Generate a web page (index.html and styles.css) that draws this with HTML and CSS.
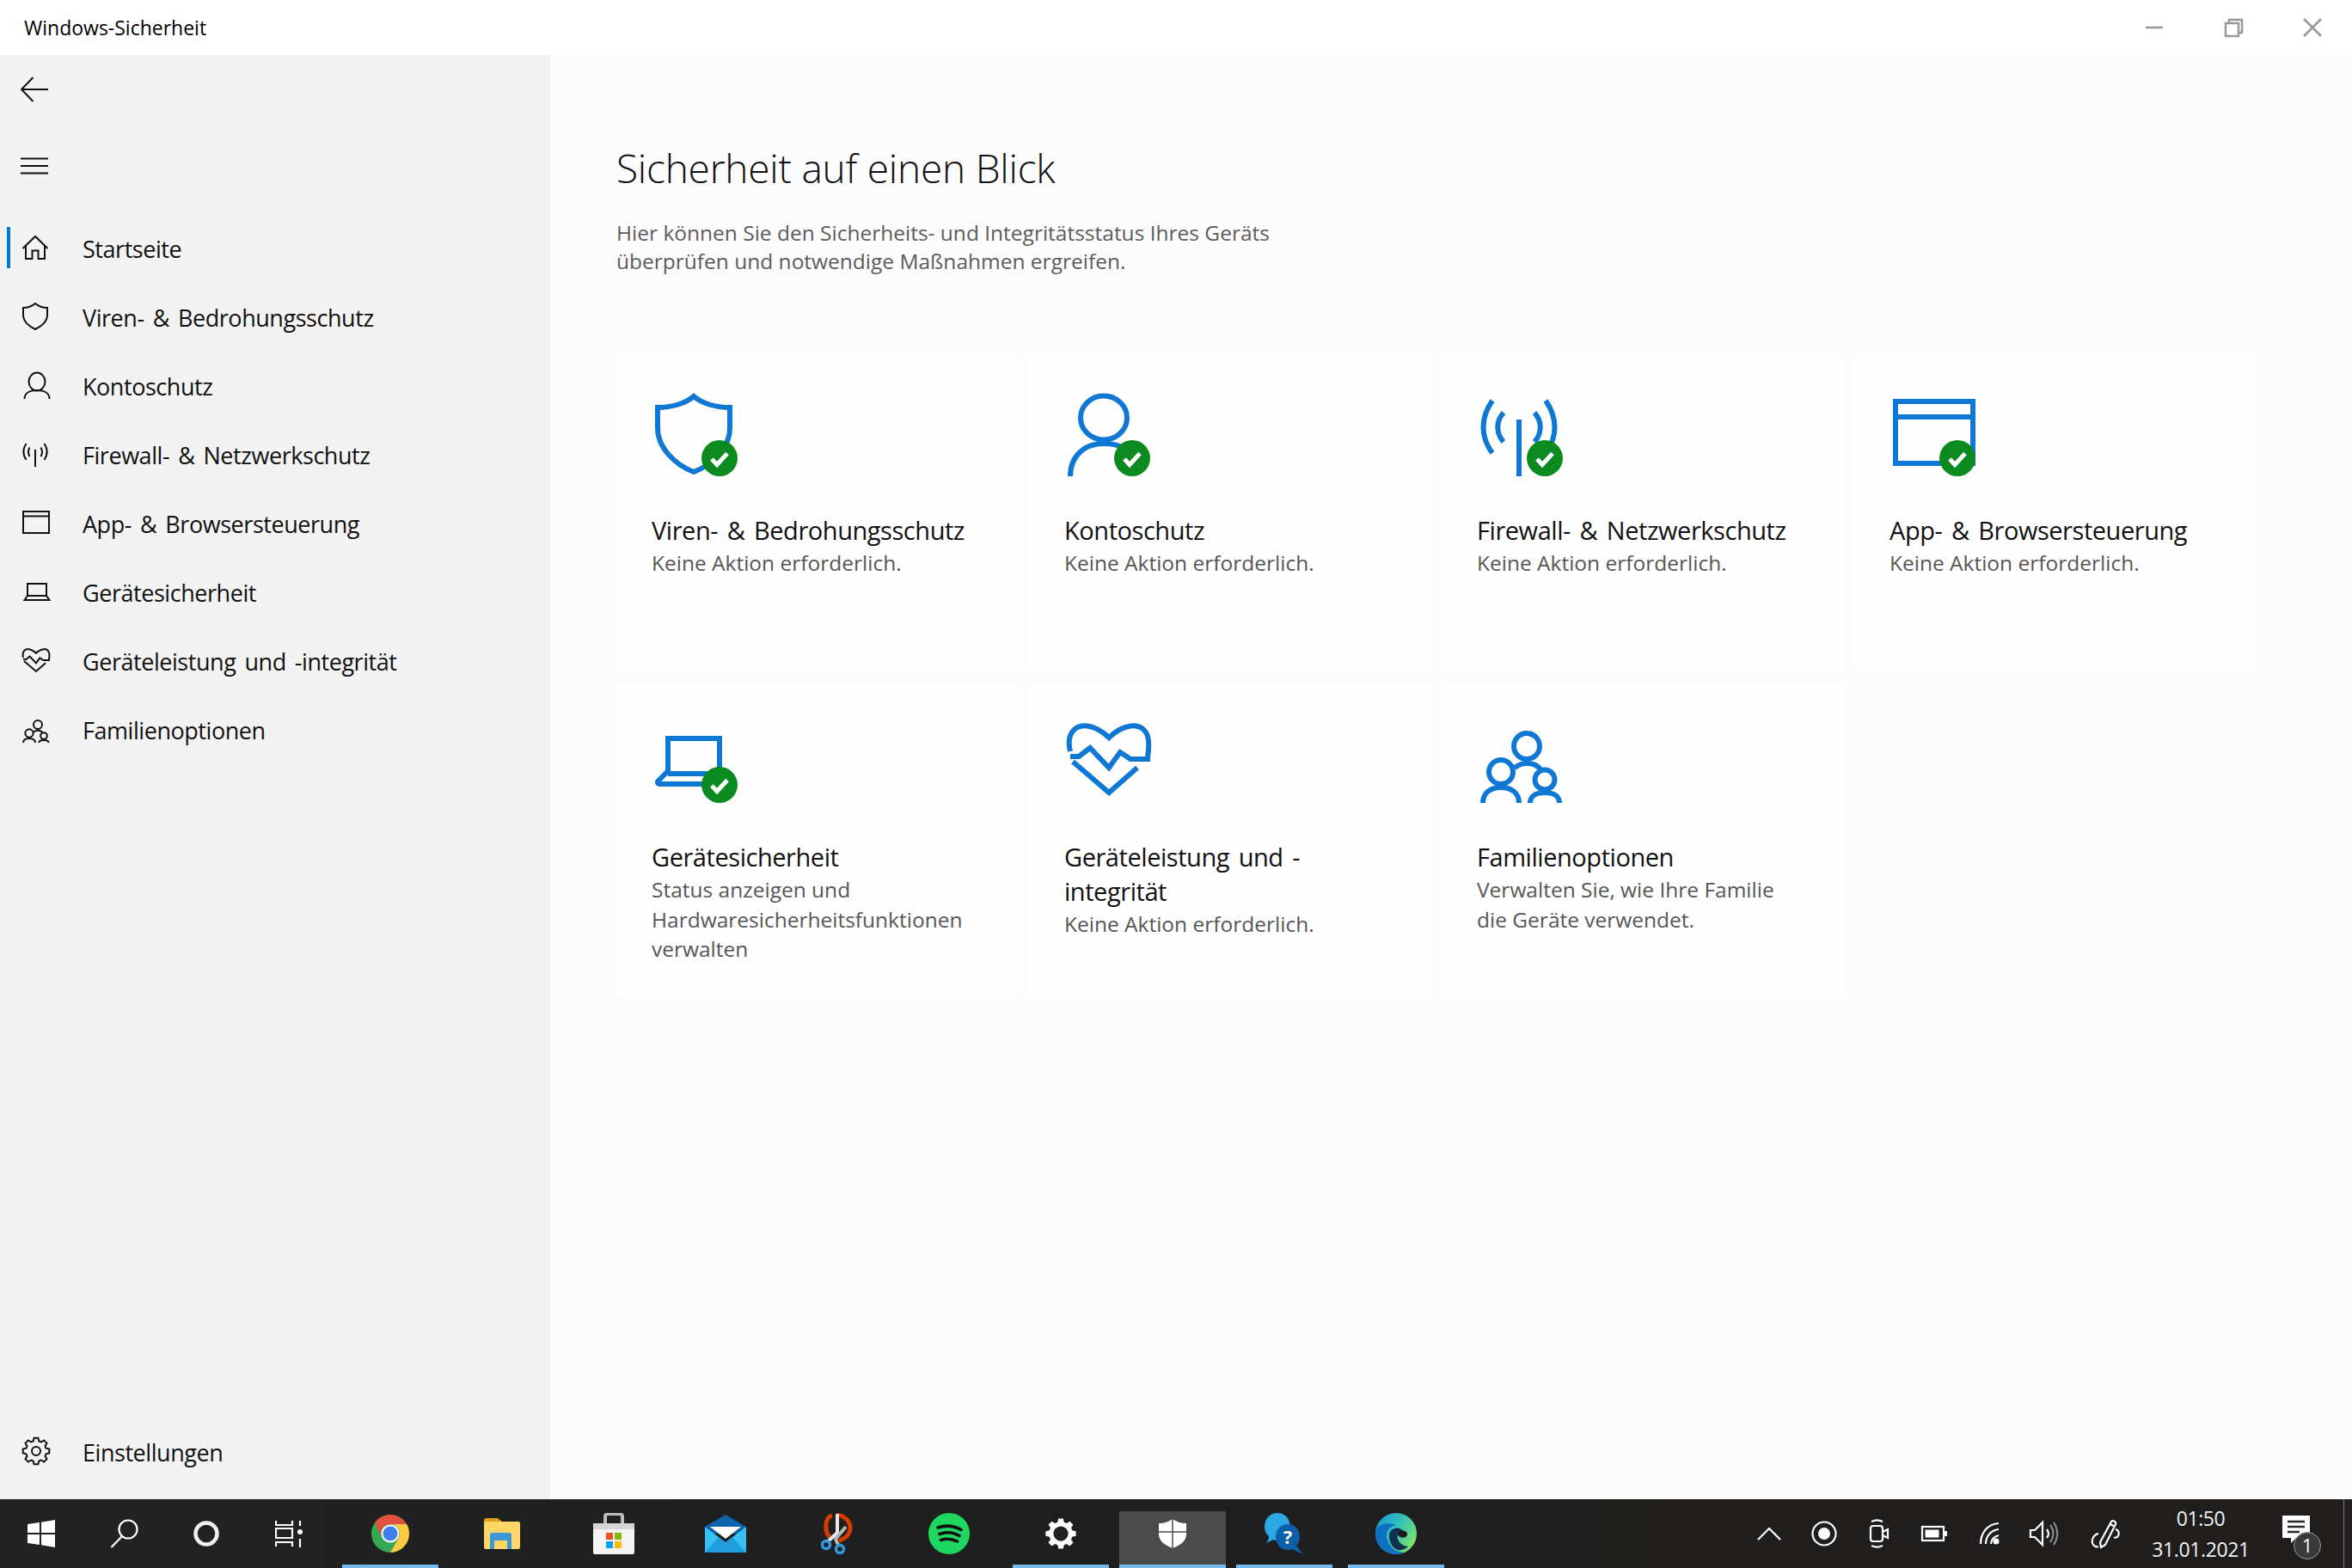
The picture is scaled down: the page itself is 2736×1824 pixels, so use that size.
FILE: index.html
```html
<!DOCTYPE html>
<html lang="de">
<head>
<meta charset="utf-8">
<title>Windows-Sicherheit</title>
<link rel="stylesheet" href="styles.css">
</head>
<body>
<div class="app">
  <header class="titlebar">
    <span class="apptitle">Windows-Sicherheit</span>
    <div class="winctrls">
      <svg class="winbtn" viewBox="0 0 92 64"><path d="M36 32h20"/></svg>
      <svg class="winbtn" viewBox="0 0 92 64"><path d="M37 27h15v15H37zM41 27v-4h15v15h-4"/></svg>
      <svg class="winbtn" viewBox="0 0 92 64"><path d="M36 22l20 20M56 22L36 42"/></svg>
    </div>
  </header>
  <div class="window">
    <aside class="sidebar">
      <div class="toolrow back">
        <svg class="nicon" viewBox="0 0 40 40"><path d="M3 20h31M16.500 6 3 20l13.500 14"/></svg>
      </div>
      <div class="toolrow menu">
        <svg class="nicon" viewBox="0 0 40 40"><path d="M2 11.500h32M2 20h32M2 28.500h32"/></svg>
      </div>
      <nav class="navlist">
        <div class="navitem active">
          <svg class="nicon" viewBox="0 0 40 40"><path d="M4.500 21 19 7l14.500 14M8 17.500V33h7.500V23.500h7V33H30V17.500"/></svg>
          <span>Startseite</span>
        </div>
        <div class="navitem">
          <svg class="nicon" viewBox="0 0 40 40"><path d="M19 5C15 8.500 10 10 5 10v8.500C5 26 12 32 19 35c7-3 14-9 14-16.500V10C28 10 23 8.500 19 5z"/></svg>
          <span>Viren- &amp; Bedrohungsschutz</span>
        </div>
        <div class="navitem">
          <svg class="nicon" viewBox="0 0 40 40"><ellipse cx="21" cy="16" rx="9.500" ry="10.500"/><path d="M6.500 36c0-6 5-10 14.500-10s14.500 4 14.500 10"/></svg>
          <span>Kontoschutz</span>
        </div>
        <div class="navitem">
          <svg class="nicon" viewBox="0 0 40 40"><path d="M19 15v20M8.500 8C4.500 14 4.500 21 8.500 27M12.500 12.500C10.500 16 10.500 19.500 12.500 23M29.500 8C33.500 14 33.500 21 29.500 27M25.500 12.500C27.500 16 27.500 19.500 25.500 23"/></svg>
          <span>Firewall- &amp; Netzwerkschutz</span>
        </div>
        <div class="navitem">
          <svg class="nicon" viewBox="0 0 40 40"><path d="M5 7h30v25H5zM5 12.500h30"/></svg>
          <span>App- &amp; Browsersteuerung</span>
        </div>
        <div class="navitem">
          <svg class="nicon" viewBox="0 0 40 40"><path d="M10 25V11h22v14M6.500 30 10 25h22l3.500 5z"/></svg>
          <span>Gerätesicherheit</span>
        </div>
        <div class="navitem">
          <svg class="nicon" viewBox="0 0 40 40"><g transform="translate(4 5) scale(.3333)" class="thin"><path d="M3 36C1 28 1 20 5 14 12 3 30 3 48 20 66 3 84 3 91 14c4 6 4 16 2 29"/><path d="M3 42h10l13-10 22 23 13-18 12 8h23"/><path d="M6 48l42 36 33-29"/></g></svg>
          <span>Geräteleistung und -integrität</span>
        </div>
        <div class="navitem">
          <svg class="nicon" viewBox="0 0 40 40"><g transform="translate(4 9) scale(.3333)" class="thin"><circle cx="54" cy="18" r="15"/><circle cx="24" cy="48" r="14"/><circle cx="75" cy="57" r="11.500"/><path d="M3 81c0-10 9-15 21-15s21 5 21 15M58 81c0-6 7-9 17-9s17 3 17 9M40 43c4-3 8-5 14-5 8 0 13 3 16 7"/></g></svg>
          <span>Familienoptionen</span>
        </div>
      </nav>
      <div class="navitem settings">
        <svg class="nicon" viewBox="0 0 40 40"><g transform="translate(20 20)"><path d="M-2.400-15.300 2.400-15.300 3.300-11.500 5.800-10.500 9.100-12.500 12.500-9.100 10.500-5.800 11.500-3.300 15.300-2.400 15.300 2.400 11.500 3.300 10.500 5.800 12.500 9.100 9.100 12.500 5.800 10.500 3.300 11.500 2.400 15.300-2.400 15.300-3.300 11.500-5.800 10.500-9.100 12.500-12.500 9.100-10.500 5.800-11.500 3.300-15.300 2.400-15.300-2.400-11.500-3.300-10.500-5.800-12.500-9.100-9.100-12.500-5.800-10.500-3.300-11.500z"/><circle r="5"/></g></svg>
        <span>Einstellungen</span>
      </div>
    </aside>
    <main class="content">
      <h1 class="pagetitle">Sicherheit auf einen Blick</h1>
      <p class="pagedesc">Hier können Sie den Sicherheits- und Integritätsstatus Ihres Geräts<br>überprüfen und notwendige Maßnahmen ergreifen.</p>
      <section class="cards">
        <article class="card">
          <svg class="cicon" viewBox="0 0 96 96">
            <path d="M45 3C36 11 20 16 3 16v24c0 22 19 42 42 51 23-9 42-29 42-51V16C70 16 54 11 45 3z"/>
            <g class="badge"><circle cx="75" cy="75" r="21"/><path d="M66 76l6 6.500 12-13"/></g>
          </svg>
          <h2>Viren- &amp; Bedrohungsschutz</h2>
          <p>Keine Aktion erforderlich.</p>
        </article>
        <article class="card">
          <svg class="cicon" viewBox="0 0 96 96">
            <ellipse cx="42" cy="28" rx="27" ry="25.500"/>
            <path d="M3 96C3 72 20 58 42 58c18 0 28 6 36 17"/>
            <g class="badge"><circle cx="75" cy="75" r="21"/><path d="M66 76l6 6.500 12-13"/></g>
          </svg>
          <h2>Kontoschutz</h2>
          <p>Keine Aktion erforderlich.</p>
        </article>
        <article class="card">
          <svg class="cicon" viewBox="0 0 96 96">
            <path d="M45 30v66M14 8C0 28 0 50 14 69M27 22c-9 10-9 24 0 34M76 8c14 20 14 42 0 61M63 22c9 10 9 24 0 34"/>
            <g class="badge"><circle cx="75" cy="75" r="21"/><path d="M66 76l6 6.500 12-13"/></g>
          </svg>
          <h2>Firewall- &amp; Netzwerkschutz</h2>
          <p>Keine Aktion erforderlich.</p>
        </article>
        <article class="card">
          <svg class="cicon" viewBox="0 0 96 96">
            <path d="M3 9h90v72H3zM3 27h90"/>
            <g class="badge"><circle cx="75" cy="75" r="21"/><path d="M66 76l6 6.500 12-13"/></g>
          </svg>
          <h2>App- &amp; Browsersteuerung</h2>
          <p>Keine Aktion erforderlich.</p>
        </article>
        <article class="card">
          <svg class="cicon" viewBox="0 0 96 96">
            <path d="M15 60V21h60v39M15 59 4 70c-2 2-1 4 3 4h60M15 62h50"/>
            <g class="badge"><circle cx="75" cy="75" r="21"/><path d="M66 76l6 6.500 12-13"/></g>
          </svg>
          <h2>Gerätesicherheit</h2>
          <p>Status anzeigen und<br>Hardwaresicherheitsfunktionen<br>verwalten</p>
        </article>
        <article class="card">
          <svg class="cicon" viewBox="0 0 96 96">
            <path d="M3 36C1 28 1 20 5 14 12 3 30 3 48 20 66 3 84 3 91 14c4 6 4 16 2 29"/>
            <path d="M3 42h10l13-10 22 23 13-18 12 8h23"/>
            <path d="M6 48l42 36 33-29"/>
          </svg>
          <h2>Geräteleistung und -<br>integrität</h2>
          <p>Keine Aktion erforderlich.</p>
        </article>
        <article class="card">
          <svg class="cicon" viewBox="0 0 96 96">
            <g transform="translate(0 12)"><circle cx="54" cy="18" r="15"/><circle cx="24" cy="48" r="14"/><circle cx="75" cy="57" r="11.500"/><path d="M3 84c0-12 9-18 21-18s21 6 21 18M58 84c0-8 7-12 17-12s17 4 17 12M40 43c4-3 8-5 14-5 8 0 13 3 16 7"/></g>
          </svg>
          <h2>Familienoptionen</h2>
          <p>Verwalten Sie, wie Ihre Familie<br>die Geräte verwendet.</p>
        </article>
      </section>
    </main>
  </div>
  <footer class="taskbar">
    <div class="sysbtn">
      <svg class="tb32" viewBox="0 0 32 32"><path class="wfill" d="M0 5l14-2v12H0zM16 2.700 32 0v15H16zM0 17h14v12L0 27zM16 17h16v15l-16-2.700z"/></svg>
    </div>
    <div class="sysbtn">
      <svg class="tb40" viewBox="0 0 40 40"><circle class="wline" cx="25" cy="15" r="10.500"/><path class="wline" d="M18 23 5.500 36"/></svg>
    </div>
    <div class="sysbtn">
      <svg class="tb40" viewBox="0 0 40 40"><circle class="wthick" cx="20" cy="20" r="12.500"/></svg>
    </div>
    <div class="sysbtn">
      <svg class="tb32" viewBox="0 0 32 32"><path class="wline" d="M1 1v5h19V1M1 10h19v11H1zM1 31v-5h19v5M29 1v6M29 22v10"/><circle class="wfill" cx="29" cy="14" r="3"/></svg>
    </div>
    <div class="apps">
      <div class="appslot open">
        <svg class="tb44" viewBox="0 0 44 44">
          <circle cx="22" cy="22" r="22" fill="#34a853"/>
          <path fill="#fbc942" d="M22 11h19a22 22 0 0 1-19 33l9.500-16.500A11 11 0 0 0 22 11z"/>
          <path fill="#e0523f" d="M22 11h19A22 22 0 0 0 4 9.300l8.500 18.200A11 11 0 0 1 22 11z"/>
          <circle cx="22" cy="22" r="10.500" fill="#fff"/><circle cx="22" cy="22" r="8.500" fill="#3f80ea"/>
        </svg>
      </div>
      <div class="appslot">
        <svg class="tbfolder" viewBox="0 0 42 36">
          <path fill="#d9a11d" d="M0 3a3 3 0 0 1 3-3h13l5 4h10v6H0z"/>
          <rect y="4" width="42" height="32" rx="2" fill="#fdd666"/>
          <path fill="#3d97d6" d="M7 36V20a3 3 0 0 1 3-3h19a3 3 0 0 1 3 3v16h-5v-9a1 1 0 0 0-1-1H13a1 1 0 0 0-1 1v9z" />
        </svg>
      </div>
      <div class="appslot">
        <svg class="tb48" viewBox="0 0 48 48">
          <path d="M14 14V4a3 3 0 0 1 3-3h14a3 3 0 0 1 3 3v10" fill="none" stroke="#bdbdbd" stroke-width="4"/>
          <path fill="#f4f4f4" d="M0 12h48v34a2 2 0 0 1-2 2H2a2 2 0 0 1-2-2z"/>
          <path fill="#d6d6d6" d="M0 12h48v7H0z"/>
          <rect x="15" y="23" width="8" height="8" fill="#f25022"/><rect x="25" y="23" width="8" height="8" fill="#7fba00"/><rect x="15" y="33" width="8" height="8" fill="#00a4ef"/><rect x="25" y="33" width="8" height="8" fill="#ffb900"/>
        </svg>
      </div>
      <div class="appslot">
        <svg class="tb48" viewBox="0 0 48 44">
          <path fill="#0f63ad" d="M0 14 24 0l24 14v8H0z"/>
          <path fill="#fff" d="M6 14h36L24 28z"/>
          <path fill="#38c0f3" d="M0 14l24 18 24-18v30H0z"/>
          <path fill="#0e7ecb" d="M48 44H0l16-18 8 6 8-6z" opacity=".55"/>
        </svg>
      </div>
      <div class="appslot">
        <svg class="tbsnip" viewBox="0 0 40 48">
          <path d="M14 3C5 5 5 22 11 28M20 2c8 1 16 8 15 17-1 7-6 11-13 13" fill="none" stroke="#d83b01" stroke-width="5"/>
          <path d="M20 1v22L8 34" fill="none" stroke="#e8e8e8" stroke-width="4"/>
          <path d="M30 16 18 30l3 7" fill="none" stroke="#b5b5b5" stroke-width="4"/>
          <circle cx="7" cy="37" r="4.500" fill="none" stroke="#2f9ae0" stroke-width="3.500"/><circle cx="23" cy="42" r="4.500" fill="none" stroke="#2f9ae0" stroke-width="3.500"/>
        </svg>
      </div>
      <div class="appslot">
        <svg class="tb48" viewBox="0 0 48 48">
          <circle cx="24" cy="24" r="24" fill="#1ed760"/>
          <path d="M11 17c9-3 19-2 27 2.500M13 24.500c7-2.500 16-2 23 2M14.500 31.500c6-2 13-1.500 19 1.500" fill="none" stroke="#111" stroke-width="3.600" stroke-linecap="round"/>
        </svg>
      </div>
      <div class="appslot open">
        <svg class="tb40" viewBox="0 0 40 40"><g transform="translate(20 20) scale(1.150)"><path class="wfill" d="M-2.400-15.300 2.400-15.300 3.300-11.500 5.800-10.500 9.100-12.500 12.500-9.100 10.500-5.800 11.500-3.300 15.300-2.400 15.300 2.400 11.500 3.300 10.500 5.800 12.500 9.100 9.100 12.500 5.800 10.500 3.300 11.500 2.400 15.300-2.400 15.300-3.300 11.500-5.800 10.500-9.100 12.500-12.500 9.100-10.500 5.800-11.500 3.300-15.300 2.400-15.300-2.400-11.500-3.300-10.500-5.800-12.500-9.100-9.100-12.500-5.800-10.500-3.300-11.500z"/><circle cx="0" cy="0" r="7.500" fill="#212121"/></g></svg>
      </div>
      <div class="appslot current">
        <svg class="tb34" viewBox="0 0 32 34"><path class="wfill" d="M16 0C12 3 6 5 0 5v13c0 8 8 13 16 16 8-3 16-8 16-16V5c-6 0-12-2-16-5z"/><path d="M16 0v34M0 15h32" stroke="#4c4b4b" stroke-width="1.500" fill="none"/></svg>
      </div>
      <div class="appslot open">
        <svg class="tb48" viewBox="0 0 48 48">
          <path fill="#2aa9e6" d="M16 0c9 0 15 7 15 17 0 9-6 15-15 15-2 0-3 0-5-1l-8 4c2-3 3-5 3-8C2 24 1 20 1 16 1 7 7 0 16 0z"/>
          <path fill="#0f5ea8" d="M28 13c9 0 14 7 14 15 0 5-2 8-4 10l8 10-13-6c-2 1-3 1-5 1-9 0-14-7-14-15s5-15 14-15z"/>
          <text x="28" y="36" class="qmark">?</text>
        </svg>
      </div>
      <div class="appslot open">
        <svg class="tb48" viewBox="0 0 48 48">
          <defs><linearGradient id="edgeg" x1="0" y1="0" x2="1" y2="0.600"><stop offset="0" stop-color="#1b8fd8"/><stop offset=".55" stop-color="#34c3b8"/><stop offset="1" stop-color="#7be06d"/></linearGradient></defs>
          <circle cx="24" cy="24" r="24" fill="url(#edgeg)"/>
          <path fill="#0d72c4" d="M0 24C0 12 14 10 24 14c-10 2-13 10-10 18 3 9 12 14 20 14-3 1-6 2-10 2C10 48 0 37 0 24z"/>
          <path fill="#12304f" d="M16 27c0-8 8-12 14-8 5 3 6 7 5 9-4 2-8 0-9-3-2 6 3 13 12 14-3 3-8 5-12 4-6-2-10-9-10-16z"/>
          <path fill="#1c1c1c" d="M26 25c1-4 5-6 8-4 3 1 4 4 2 6-3 2-8 1-10-2z"/>
        </svg>
      </div>
    </div>
    <div class="tray">
      <div class="trayitem"><svg class="tb40" viewBox="0 0 40 40"><path class="wline" d="M7 27 20 14l13 13"/></svg></div>
      <div class="trayitem"><svg class="tb40" viewBox="0 0 40 40"><circle class="wline" cx="20" cy="20" r="13.500"/><circle class="wfill" cx="20" cy="20" r="7"/></svg></div>
      <div class="trayitem"><svg class="tb40" viewBox="0 0 40 40"><rect class="wline" x="10" y="11" width="14" height="18" rx="3"/><path class="wline" d="M24 18l6-3v10l-6-3M11 6c4-2 9-2 13 0M11 34c4 2 9 2 13 0"/></svg></div>
      <div class="trayitem"><svg class="tb40" viewBox="0 0 40 40"><rect class="wline" x="6" y="12" width="25" height="16"/><rect class="wfill" x="9.500" y="15.500" width="16" height="9"/><rect class="wfill" x="32" y="17" width="3" height="6"/></svg></div>
      <div class="trayitem"><svg class="tb40" viewBox="0 0 40 40"><path class="wline" d="M10 32C10 19 18 9 31 8M16 32c0-9 6-16 15-17M22 32c0-5 4-9 9-10"/><circle class="wfill" cx="28" cy="29" r="3.500"/></svg></div>
      <div class="trayitem"><svg class="tb40" viewBox="0 0 40 40"><path class="wline" d="M4 16h5l9-9v26l-9-9H4zM23 15c2.500 3.500 2.500 7 0 10"/><path class="gline" d="M27 10c4.500 6.500 4.500 13.500 0 20M31 7c5.500 8.500 5.500 17.500 0 26"/></svg></div>
      <div class="trayitem pen"><svg class="tb40" viewBox="0 0 40 40"><path class="wline" d="M13 30 26 6c2-2 6 0 5 3L19 33l-5 3zM25 9l5 3M11 20c-5 1-8 6-7 11 1 3 4 5 7 4M31 15c4 1 5 6 2 9l-4 1"/></svg></div>
      <div class="clock"><span>01:50</span><span>31.01.2021</span></div>
      <div class="notif">
        <svg class="tbnotif" viewBox="0 0 32 34"><path class="wfill" d="M0 0h32v26H16l-6 6v-6H0z"/><path d="M6 7h20M6 13h20M6 19h14" stroke="#2a2a2a" stroke-width="2.500" fill="none"/></svg>
        <span class="count">1</span>
      </div>
      <div class="showdesk"></div>
    </div>
  </footer>
</div>
</body>
</html>
```
FILE: styles.css
```css
* { box-sizing: border-box; }
html, body { margin: 0; padding: 0; }
body { font-family: "Open Sans", "Noto Sans", "Liberation Sans", sans-serif; color: #000; background: #fff; }
.app { width: 2736px; height: 1824px; display: flex; flex-direction: column; overflow: hidden; }

.titlebar { height: 64px; display: flex; align-items: center; justify-content: space-between; background: #fff; }
.apptitle { margin-left: 28px; font-size: 23px; }
.winctrls { display: flex; }
.winbtn { width: 92px; height: 64px; fill: none; stroke: #999; stroke-width: 2.500; }

.window { flex: 1; display: flex; min-height: 0; }
.sidebar { width: 640px; background: #f3f3f3; display: flex; flex-direction: column; padding-bottom: 16px; }
.toolrow { display: flex; align-items: center; padding-left: 22px; }
.back { height: 80px; }
.menu { height: 98px; }
.nicon { width: 40px; height: 40px; fill: none; stroke: #111; stroke-width: 2; flex: none; }
.nicon .thin { stroke-width: 6; }
.navlist { margin-top: 6px; display: flex; flex-direction: column; }
.navitem { position: relative; height: 80px; display: flex; align-items: center; padding-left: 22px; font-size: 27px; letter-spacing: -.45px; word-spacing: 3.500px; color: #111; }
.navitem span { margin-left: 34px; position: relative; top: 1px; }
.active::before { content: ""; position: absolute; left: 8px; top: 16px; width: 4px; height: 48px; background: #0078d4; }
.settings { margin-top: auto; }

.content { flex: 1; background: #fcfcfc; padding: 101px 0 0 77px; }
.pagetitle { margin: 0; font-size: 46px; line-height: 60px; font-weight: 300; letter-spacing: -.22px; color: #111; }
.pagedesc { margin: 29px 0 0; font-size: 24.500px; line-height: 33px; color: #5c5c5c; }

.cards { margin-top: 95px; display: grid; grid-template-columns: repeat(4, 466px); grid-auto-rows: 365px; column-gap: 14px; row-gap: 15px; }
.card { background: #fefefe; padding: 43px 0 0 41px; }
.cicon { display: block; width: 96px; height: 96px; margin-left: 4px; fill: none; stroke: #0f78d4; stroke-width: 6; overflow: visible; }
.badge circle { fill: #0b8a20; stroke: none; }
.badge path { stroke: #fff; stroke-width: 5; fill: none; }
.card h2 { margin: 43px 0 0; font-size: 29px; line-height: 40px; font-weight: 400; letter-spacing: -.45px; word-spacing: 3.500px; color: #111; }
.card p { margin: 1px 0 0; font-size: 24.500px; line-height: 34.500px; color: #565656; }

.taskbar { height: 80px; display: flex; align-items: center; background: linear-gradient(90deg, #232323 0, #1e1e1e 40%, #201e1c 100%); }
.sysbtn { width: 96px; height: 80px; display: flex; align-items: center; justify-content: center; flex: none; }
.tb32 { width: 32px; height: 32px; }
.tb40 { width: 40px; height: 40px; }
.tb44 { width: 44px; height: 44px; }
.tb48 { width: 48px; height: 48px; }
.tb34 { width: 32px; height: 34px; }
.tbfolder { width: 42px; height: 36px; }
.tbsnip { width: 40px; height: 48px; }
.tbnotif { width: 32px; height: 34px; }
.wfill { fill: #fff; stroke: none; }
.wline { fill: none; stroke: #fff; stroke-width: 2.200; }
.wthick { fill: none; stroke: #f2f2f2; stroke-width: 4.500; }
.gline { fill: none; stroke: #8a8a8a; stroke-width: 2.200; }
.qmark { font-family: "Open Sans", sans-serif; font-size: 22px; font-weight: 700; fill: #fff; text-anchor: middle; }

.apps { display: flex; margin-left: 8px; gap: 6px; height: 100%; }
.appslot { position: relative; width: 124px; height: 80px; display: flex; align-items: center; justify-content: center; }
.appslot.open::after { content: ""; position: absolute; left: 6px; right: 6px; bottom: 0; height: 4px; background: #76b9ed; }
.appslot.current { align-self: flex-end; height: 66px; background: #4c4b4b; padding-bottom: 14px; }
.appslot.current::after { content: ""; position: absolute; left: 0; right: 0; bottom: 0; height: 4px; background: #76b9ed; }

.tray { margin-left: auto; display: flex; align-items: center; height: 100%; }
.trayitem { width: 64px; display: flex; justify-content: center; }
.trayitem.pen { width: 80px; }
.clock { width: 140px; display: flex; flex-direction: column; align-items: center; color: #f2f2f2; font-size: 23px; line-height: 36px; letter-spacing: -.4px; }
.notif { position: relative; width: 82px; height: 80px; display: flex; align-items: center; }
.tbnotif { margin: -8px 0 0 25px; }
.count { position: absolute; left: 38px; top: 38px; width: 32px; height: 32px; border-radius: 50%; background: #3a3a3a; border: 1.500px solid #9a9a9a; color: #fff; font-size: 22px; line-height: 29px; text-align: center; }
.showdesk { width: 24px; height: 100%; position: relative; }
.showdesk::before { content: ""; position: absolute; left: 14px; top: 0; bottom: 0; width: 1px; background: #7a7a7a; }
```
